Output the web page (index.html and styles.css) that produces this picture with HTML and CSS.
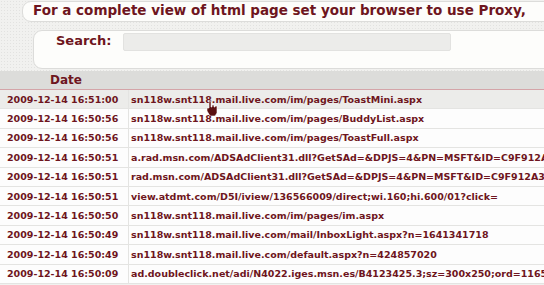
FILE: index.html
```html
<!DOCTYPE html>
<html lang="en">
<head>
  <meta charset="UTF-8" />
  <title>Proxy log</title>
  <link rel="stylesheet" href="styles.css">
</head>
<body>
  <div class="notice">For a complete view of html page set your browser to use Proxy,</div>

  <div class="search-box">
    <label class="search-label">Search:</label>
    <input class="search-input" type="text">
  </div>

  <table class="log">
    <thead>
      <tr><th class="col-date">Date</th><th></th></tr>
    </thead>
    <tbody>
      <tr class="hover"><td class="col-date">2009-12-14 16:51:00</td><td>sn118w.snt118.mail.live.com/im/pages/ToastMini.aspx</td></tr>
      <tr><td class="col-date">2009-12-14 16:50:56</td><td>sn118w.snt118.mail.live.com/im/pages/BuddyList.aspx</td></tr>
      <tr><td class="col-date">2009-12-14 16:50:56</td><td>sn118w.snt118.mail.live.com/im/pages/ToastFull.aspx</td></tr>
      <tr><td class="col-date">2009-12-14 16:50:51</td><td>a.rad.msn.com/ADSAdClient31.dll?GetSAd=&amp;DPJS=4&amp;PN=MSFT&amp;ID=C9F912A3</td></tr>
      <tr><td class="col-date">2009-12-14 16:50:51</td><td>rad.msn.com/ADSAdClient31.dll?GetSAd=&amp;DPJS=4&amp;PN=MSFT&amp;ID=C9F912A3</td></tr>
      <tr><td class="col-date">2009-12-14 16:50:51</td><td>view.atdmt.com/D5I/iview/136566009/direct;wi.160;hi.600/01?click=</td></tr>
      <tr><td class="col-date">2009-12-14 16:50:50</td><td>sn118w.snt118.mail.live.com/im/pages/im.aspx</td></tr>
      <tr><td class="col-date">2009-12-14 16:50:49</td><td>sn118w.snt118.mail.live.com/mail/InboxLight.aspx?n=1641341718</td></tr>
      <tr><td class="col-date">2009-12-14 16:50:49</td><td>sn118w.snt118.mail.live.com/default.aspx?n=424857020</td></tr>
      <tr><td class="col-date">2009-12-14 16:50:09</td><td>ad.doubleclick.net/adi/N4022.iges.msn.es/B4123425.3;sz=300x250;ord=1165</td></tr>
    </tbody>
  </table>

  <svg class="cursor" width="12" height="16" viewBox="0 0 12 16">
    <path d="M3 1h2v6h1V5h2v2h1V6h2v7l-2 3H4L1 11V8h2z" fill="#5a1010" stroke="#fff" stroke-width="0.6"/>
  </svg>
</body>
</html>
```

FILE: styles.css
```css
body {
  margin: 0;
  width: 544px;
  height: 285px;
  overflow: hidden;
  position: relative;
  font-family: "DejaVu Sans", sans-serif;
  color: #6e1520;
  background-color: #f1f1ef;
  background-image: radial-gradient(#e2e2e0 0.6px, transparent 0.8px);
  background-size: 3px 3px;
}

.notice {
  margin: 1px 0 0 22px;
  width: 600px;
  height: 21px;
  box-sizing: border-box;
  padding: 0 0 0 10px;
  background: #fdfdfb;
  border: 1px solid #dcdcda;
  border-radius: 9px;
  font-size: 13.5px;
  font-weight: bold;
  white-space: nowrap;
}

.search-box {
  display: flex;
  align-items: flex-start;
  margin: 8px 0 0 33px;
  width: 600px;
  height: 39px;
  box-sizing: border-box;
  padding: 2px 0 0 0;
  background: #fdfdfb;
  border: 1px solid #dcdcda;
  border-radius: 9px;
}

.search-label {
  width: 88px;
  padding: 0 0 0 22px;
  box-sizing: border-box;
  font-size: 13px;
  font-weight: bold;
}

.search-input {
  margin: 0 0 0 1px;
  width: 328px;
  height: 18px;
  box-sizing: border-box;
  border: 1px solid #e2e2e0;
  border-radius: 2px;
  background: #ececea;
}

.log {
  margin-top: 2px;
  width: 544px;
  border-collapse: collapse;
  font-size: 9.5px;
  font-weight: bold;
  white-space: nowrap;
}

.log th {
  height: 18px;
  padding: 0;
  background: #dcdcda;
  border-bottom: 1px solid #d4a4a8;
  text-align: left;
  font-size: 12px;
}

.log th.col-date {
  padding-left: 50px;
}

.log td {
  height: 18.4px;
  padding: 0 0 0 2px;
  background: #fdfdfd;
  border-bottom: 1px solid #e4e4e2;
  overflow: hidden;
  max-width: 410px;
}

.log td.col-date {
  width: 121px;
  padding-left: 7px;
  border-right: 1px solid #e4e4e2;
}

.log tr.hover td {
  background: #ececea;
}

.cursor {
  position: absolute;
  left: 206px;
  top: 100px;
}
```
